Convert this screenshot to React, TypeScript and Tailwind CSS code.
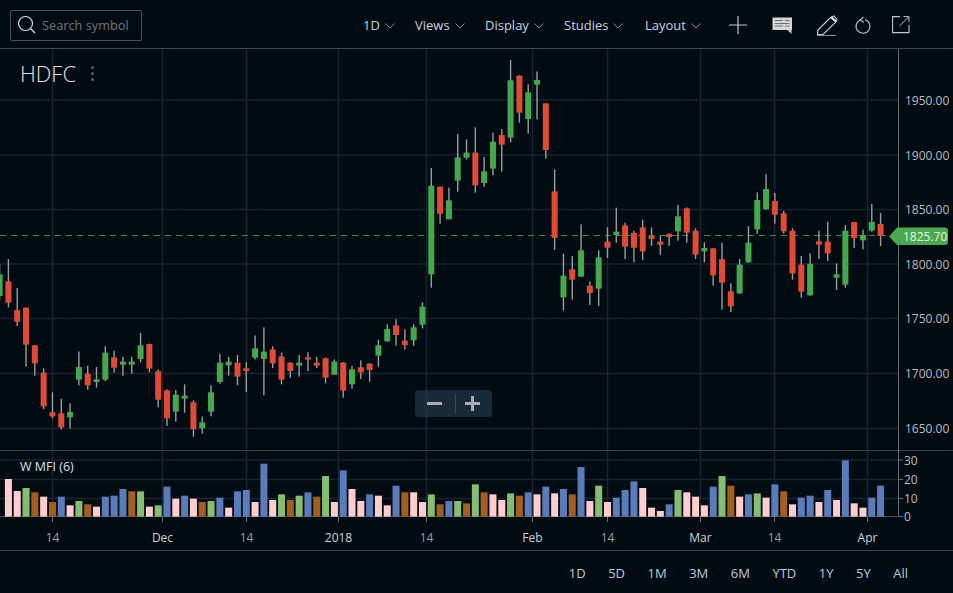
import React from "react";

type C = [number, number, number, number, "r" | "g"];

// wickTop, wickBottom, bodyTop, bodyBottom, read at 3x off the price pane
const part1: C[] = [
  [72, 182, 103, 168, "g"], [57, 202, 124, 188, "r"], [144, 258, 210, 245, "r"], [202, 380, 203, 314, "r"],
  [315, 407, 316, 370, "r"], [385, 508, 398, 499, "r"], [457, 535, 517, 529, "r"], [476, 568, 520, 562, "r"],
  [490, 566, 516, 532, "g"], [334, 436, 381, 419, "g"], [377, 449, 401, 436, "r"], [381, 443, 418, 426, "g"],
  [319, 423, 338, 419, "g"], [332, 398, 352, 383, "r"], [351, 407, 365, 374, "g"], [351, 401, 365, 374, "g"],
  [279, 367, 316, 357, "g"], [311, 397, 312, 386, "r"], [388, 502, 394, 479, "r"], [448, 558, 451, 535, "r"],
  [450, 545, 464, 515, "g"], [433, 518, 467, 476, "g"], [481, 590, 487, 568, "r"], [530, 581, 547, 565, "g"],
  [436, 529, 457, 515, "g"], [341, 431, 368, 426, "g"], [351, 407, 365, 376, "g"], [345, 436, 368, 410, "r"],
  [367, 456, 385, 393, "r"], [286, 358, 325, 353, "g"], [262, 466, 335, 357, "g"], [319, 384, 328, 370, "r"],
  [338, 433, 349, 419, "r"], [367, 413, 368, 393, "r"], [345, 410, 368, 377, "g"], [337, 393, 352, 359, "r"],
  [351, 384, 368, 377, "r"],
];
const part2: C[] = [
  [922, 1000, 925, 983, "r"], [928, 975, 935, 974, "g"], [936, 1043, 938, 1022, "r"], [948, 1016, 958, 1003, "g"],
  [931, 987, 952, 967, "r"], [940, 995, 941, 960, "r"], [869, 950, 886, 917, "g"], [823, 875, 837, 874, "g"],
  [808, 887, 826, 855, "r"], [838, 898, 872, 885, "r"], [823, 887, 832, 871, "g"], [757, 835, 770, 824, "g"],
  [354, 713, 407, 673, "g"], [410, 521, 410, 491, "r"], [413, 508, 451, 508, "g"], [252, 425, 322, 392, "g"],
  [268, 329, 308, 323, "g"], [232, 428, 308, 406, "r"], [321, 410, 364, 399, "g"], [248, 376, 275, 356, "g"],
  [238, 365, 255, 284, "r"], [30, 277, 91, 263, "g"], [76, 218, 77, 188, "r"], [103, 251, 127, 207, "g"],
  [64, 208, 90, 104, "g"], [160, 326, 160, 300, "r"], [358, 600, 424, 564, "r"], [611, 782, 677, 742, "g"],
  [618, 749, 658, 689, "r"], [523, 681, 601, 680, "g"], [694, 765, 707, 729, "r"], [601, 768, 622, 716, "g"],
  [532, 624, 575, 593, "r"], [473, 578, 545, 555, "g"], [518, 627, 526, 590, "r"],
];
const part3: C[] = [
  [182, 277, 189, 233, "r"], [149, 270, 172, 244, "r"], [172, 228, 197, 207, "r"], [197, 254, 215, 224, "r"],
  [190, 228, 192, 201, "r"], [105, 212, 139, 184, "g"], [112, 218, 115, 188, "r"], [175, 267, 182, 254, "r"],
  [217, 277, 234, 244, "g"], [234, 347, 235, 316, "r"], [218, 419, 268, 338, "r"], [340, 426, 364, 409, "r"],
  [267, 372, 284, 370, "g"], [168, 278, 218, 277, "g"], [67, 191, 90, 178, "g"], [13, 119, 57, 118, "g"],
  [69, 161, 93, 134, "r"], [123, 191, 130, 184, "r"], [175, 329, 182, 310, "r"], [258, 383, 284, 365, "r"],
  [250, 377, 281, 376, "g"], [182, 267, 214, 224, "r"], [155, 273, 215, 250, "r"], [280, 360, 313, 323, "g"],
  [165, 353, 182, 344, "g"], [155, 234, 156, 204, "r"], [179, 238, 195, 211, "g"], [102, 185, 156, 182, "g"],
  [129, 228, 162, 198, "r"],
];

const candles = [
  ...part1.map((c) => toPage(c, 240)),
  ...part2.map((c) => toPage(c, 50)),
  ...part3.map((c) => toPage(c, 170)),
];

function toPage(c: C, top: number): C {
  return [top + c[0] / 3, top + c[1] / 3, top + c[2] / 3, top + c[3] / 3, c[4]];
}

const barColor = { p: "#ffcdcd", g: "#85bd71", b: "#5b7cbb", o: "#a65e20" };
type B = [number, keyof typeof barColor];

// index 1 onward, top of bar at 3x, zero line is 200
const bars: B[] = [
  [87, "p"], [123, "p"], [114, "g"], [127, "o"], [140, "p"], [156, "o"], [140, "b"], [166, "p"], [153, "g"], [163, "o"],
  [170, "p"], [140, "b"], [137, "b"], [117, "b"], [124, "o"], [124, "g"], [170, "p"], [166, "g"], [110, "b"], [146, "p"],
  [137, "b"], [146, "p"], [156, "o"], [153, "g"], [143, "b"], [173, "p"], [124, "b"], [120, "b"], [156, "p"], [41, "b"],
  [150, "p"], [133, "g"], [150, "o"], [137, "g"], [127, "b"], [140, "o"], [78, "g"], [156, "p"], [61, "b"], [117, "p"],
  [153, "p"], [133, "b"], [137, "p"], [166, "p"], [107, "b"], [127, "o"], [127, "p"], [156, "p"], [133, "g"], [163, "o"],
  [153, "b"], [153, "g"], [160, "o"], [103, "g"], [127, "o"], [133, "p"], [150, "p"], [130, "g"], [137, "o"], [127, "b"],
  [133, "p"], [110, "b"], [130, "p"], [117, "b"], [133, "o"], [51, "b"], [153, "p"], [107, "g"], [156, "p"], [143, "b"],
  [120, "b"], [94, "b"], [114, "p"], [173, "p"], [183, "p"], [163, "b"], [120, "g"], [127, "p"], [140, "p"], [166, "p"],
  [110, "b"], [78, "g"], [107, "o"], [140, "p"], [133, "b"], [130, "g"], [143, "p"], [103, "b"], [124, "o"], [163, "p"],
  [143, "b"], [137, "b"], [156, "p"], [120, "b"], [150, "p"], [31, "b"], [160, "p"], [173, "p"], [143, "b"], [107, "b"],
];

const xAt = (i: number) => 8.81 * i - 0.4;

const vLines = [52.5, 162.5, 246.5, 338.5, 426.5, 532.5, 607.5, 700.5, 774.5, 867.5];
const hLines: [number, string][] = [
  [100, "1950.00"], [155, "1900.00"], [209.5, "1850.00"], [264, "1800.00"], [318.5, "1750.00"], [373.5, "1700.00"], [428.5, "1650.00"],
];
const mfiLines: [number, string][] = [[460, "30"], [479.5, "20"], [498.5, "10"], [516.5, "0"]];
const timeLabels: [number, string, string][] = [
  [52.5, "14", "#9aa2a8"], [162.5, "Dec", "#d0d4d8"], [246.5, "14", "#9aa2a8"], [338.5, "2018", "#d0d4d8"], [426.5, "14", "#9aa2a8"],
  [532.5, "Feb", "#d0d4d8"], [607.5, "14", "#9aa2a8"], [700.5, "Mar", "#d0d4d8"], [774.5, "14", "#9aa2a8"], [867.5, "Apr", "#d0d4d8"],
];

const Chevron = () => (
  <svg width="10" height="6" viewBox="0 0 10 6" className="ml-[5px] mt-px" fill="none" stroke="#7f8a94" strokeWidth="1">
    <path d="M0.5 0.5 L5 5 L9.5 0.5" />
  </svg>
);

const menu: [string, string][] = [
  ["1D", "w-[52px]"], ["Views", "w-[70px]"], ["Display", "w-[79px]"], ["Studies", "w-[81px]"], ["Layout", "w-[85px]"],
];

const Header = () => (
  <div className="flex h-[49px] shrink-0 items-center border-b border-[#44484b] pt-[2px]">
    <div className="ml-[10px] flex h-[31px] w-[132px] items-center rounded-[2px] border border-[#4e5256]">
      <svg width="20" height="20" viewBox="0 0 20 20" className="ml-[6px]" fill="none" stroke="#d8dcdf" strokeWidth="1.2">
        <circle cx="8.5" cy="8.5" r="7" />
        <path d="M13.5 13.5 L18 18" />
      </svg>
      <span className="ml-[5px] mt-px text-[12.75px] text-[#71767a]">Search symbol</span>
    </div>
    <div className="ml-[221px] mt-px flex items-center text-[13px] text-[#c6d4df]">
      {menu.map(([label, w]) => (
        <div key={label} className={`flex items-center ${w}`}>
          <span>{label}</span>
          <Chevron />
        </div>
      ))}
    </div>
    <div className="ml-[-2px] flex items-center">
      <svg width="20" height="20" viewBox="0 0 20 20" stroke="#c4c8cb" strokeWidth="1.2" className="-mt-[1px]">
        <path d="M1 10 H19 M10 1 V19" />
      </svg>
      <svg width="21" height="18" viewBox="0 0 21 18" className="ml-[24px] mt-[1px]">
        <path d="M0.5 0.5 H20 V13 H19.5 V17 L15.5 13 H0.5 Z" fill="#d4d6d8" />
        <path d="M3 3.5 H11 M3 6.5 H17.5 M3 9 H11 M13 3.5 H17.5 M13 9 H17.5" stroke="#6b7176" strokeWidth="1" />
      </svg>
      <svg width="23" height="21" viewBox="0 0 23 21" className="ml-[23px]" fill="none" stroke="#c8ccd0" strokeWidth="1.1">
        <path d="M2 15 L14.5 2.5 L18 1 L21 4.5 L19.5 7.5 L7 19.5 H1.5 Z" />
        <path d="M15 2 L20 7" />
        <path d="M16 1.5 L20.5 5.5 L19 7 L14.5 3 Z" fill="#e4e6e8" stroke="none" />
        <path d="M1 20.5 H20" stroke="#8a8f93" />
      </svg>
      <svg width="18" height="20" viewBox="0 0 18 20" className="ml-[15px] mt-[1px]" fill="none" stroke="#c0c4c8" strokeWidth="1.1">
        <path d="M6.5 3.8 A7 7 0 1 0 11 3.6" />
        <path d="M9.5 0.8 L6.2 3.8 L9.8 6.5" />
      </svg>
      <svg width="18" height="18" viewBox="0 0 18 18" className="ml-[20px]" fill="none" stroke="#c0c4c8" strokeWidth="1.1">
        <path d="M8 0.6 H0.6 V16.6 H17 V9" />
        <path d="M7.5 10 L16.8 0.8 M11.5 0.6 H17 V6" strokeWidth="1" />
      </svg>
    </div>
  </div>
);

const Chart = () => (
  <svg width="953" height="501" viewBox="0 49 953 501" className="block shrink-0">
    {hLines.map(([y]) => (
      <line key={y} x1="0" x2="898" y1={y} y2={y} stroke="#182633" strokeWidth="1.6" />
    ))}
    {vLines.map((x) => (
      <line key={x} x1={x} x2={x} y1="49" y2="450" stroke="#182633" strokeWidth="1.6" />
    ))}
    {mfiLines.slice(0, 3).map(([y]) => (
      <line key={y} x1="0" x2="898" y1={y} y2={y} stroke="#182633" strokeWidth="1.6" />
    ))}
    {vLines.map((x) => (
      <line key={x} x1={x} x2={x} y1="450" y2="517" stroke="#182633" strokeWidth="1.6" />
    ))}

    <line x1="0" x2="898" y1="235.5" y2="235.5" stroke="#3c8a47" strokeWidth="1" strokeDasharray="6 5" />

    {candles.map((c, i) => (
      <g key={i}>
        <rect x={xAt(i) - 0.7} y={c[0]} width="1.4" height={c[1] - c[0]} fill="#9c9c9c" />
        <rect x={xAt(i) - 3} y={c[2]} width="6" height={Math.max(c[3] - c[2], 2)} fill={c[4] === "r" ? "#e34a36" : "#45a84c"} />
      </g>
    ))}

    <line x1="898.5" x2="898.5" y1="49" y2="450" stroke="#666b6f" />
    <line x1="0" x2="953" y1="450.5" y2="450.5" stroke="#3c4145" />
    <line x1="898.5" x2="898.5" y1="450" y2="517" stroke="#666b6f" />
    <line x1="0" x2="903" y1="516.5" y2="516.5" stroke="#4a4f53" strokeWidth="1.2" />

    {bars.map(([top, color], i) => (
      <rect key={i} x={xAt(i + 1) - 3.5} y={450 + top / 3} width="7" height={(200 - top) / 3} fill={barColor[color]} />
    ))}

    {mfiLines.map(([y]) => (
      <line key={y} x1="898" x2="903" y1={y} y2={y} stroke="#666b6f" />
    ))}
    {vLines.map((x) => (
      <line key={x} x1={x} x2={x} y1="517" y2="522" stroke="#6a6f73" />
    ))}

    <g fontFamily="'Open Sans', sans-serif" fontSize="12" fill="#b8bdc1">
      {hLines.map(([y, t]) => (
        <text key={t} x="905" y={y + 4.5}>{t}</text>
      ))}
      {mfiLines.map(([y, t]) => (
        <text key={t} x="904" y={y + 4.5}>{t}</text>
      ))}
      {timeLabels.map(([x, t, color]) => (
        <text key={x} x={x} y="541.5" textAnchor="middle" fill={color}>{t}</text>
      ))}
      <text x="20" y="471" fontSize="12.5" fill="#d4e2ec">W MFI (6)</text>
    </g>

    <path d="M889 236.5 L897 227.5 H945 Q948 227.5 948 230.5 V242 Q948 245 945 245 H897 Z" fill="#4aa94f" />
    <text x="903" y="241" fontFamily="'Open Sans', sans-serif" fontSize="12" fill="#eef6ee">1825.70</text>
  </svg>
);

const ranges = ["1D", "5D", "1M", "3M", "6M", "YTD", "1Y", "5Y", "All"];

export default function App() {
  return (
    <div className="relative flex h-[593px] w-[953px] flex-col overflow-hidden bg-[#030b13] font-['Open_Sans',sans-serif]">
      <Header />
      <Chart />
      <div className="flex h-[43px] items-center justify-end gap-[22.5px] border-t border-[#3c4145] pr-[45px] pt-[3px] text-[13px] text-[#b9cbd9]">
        {ranges.map((r) => (
          <span key={r}>{r}</span>
        ))}
      </div>

      <div className="absolute left-[20px] top-[58px] flex items-center">
        <span className="text-[22px] font-light leading-[30px] text-[#e0e4e4]">HDFC</span>
        <div className="ml-[15px] flex flex-col gap-[3px]">
          <span className="size-[3px] rounded-full bg-[#5c6266]" />
          <span className="size-[3px] rounded-full bg-[#5c6266]" />
          <span className="size-[3px] rounded-full bg-[#5c6266]" />
        </div>
      </div>

      <div className="absolute left-[415px] top-[390px] flex h-[27px] w-[77px] items-center rounded-[4px] bg-[#24384a]/70">
        <span className="ml-[12px] h-[3px] w-[15px] bg-[#a9adb0]" />
        <span className="ml-[13px] h-[19px] w-px bg-[#3c4c58]" />
        <span className="relative ml-[9px] size-[15px]">
          <span className="absolute left-0 top-[6px] h-[3px] w-[15px] bg-[#a9adb0]" />
          <span className="absolute left-[6px] top-0 h-[15px] w-[3px] bg-[#a9adb0]" />
        </span>
      </div>
    </div>
  );
}
